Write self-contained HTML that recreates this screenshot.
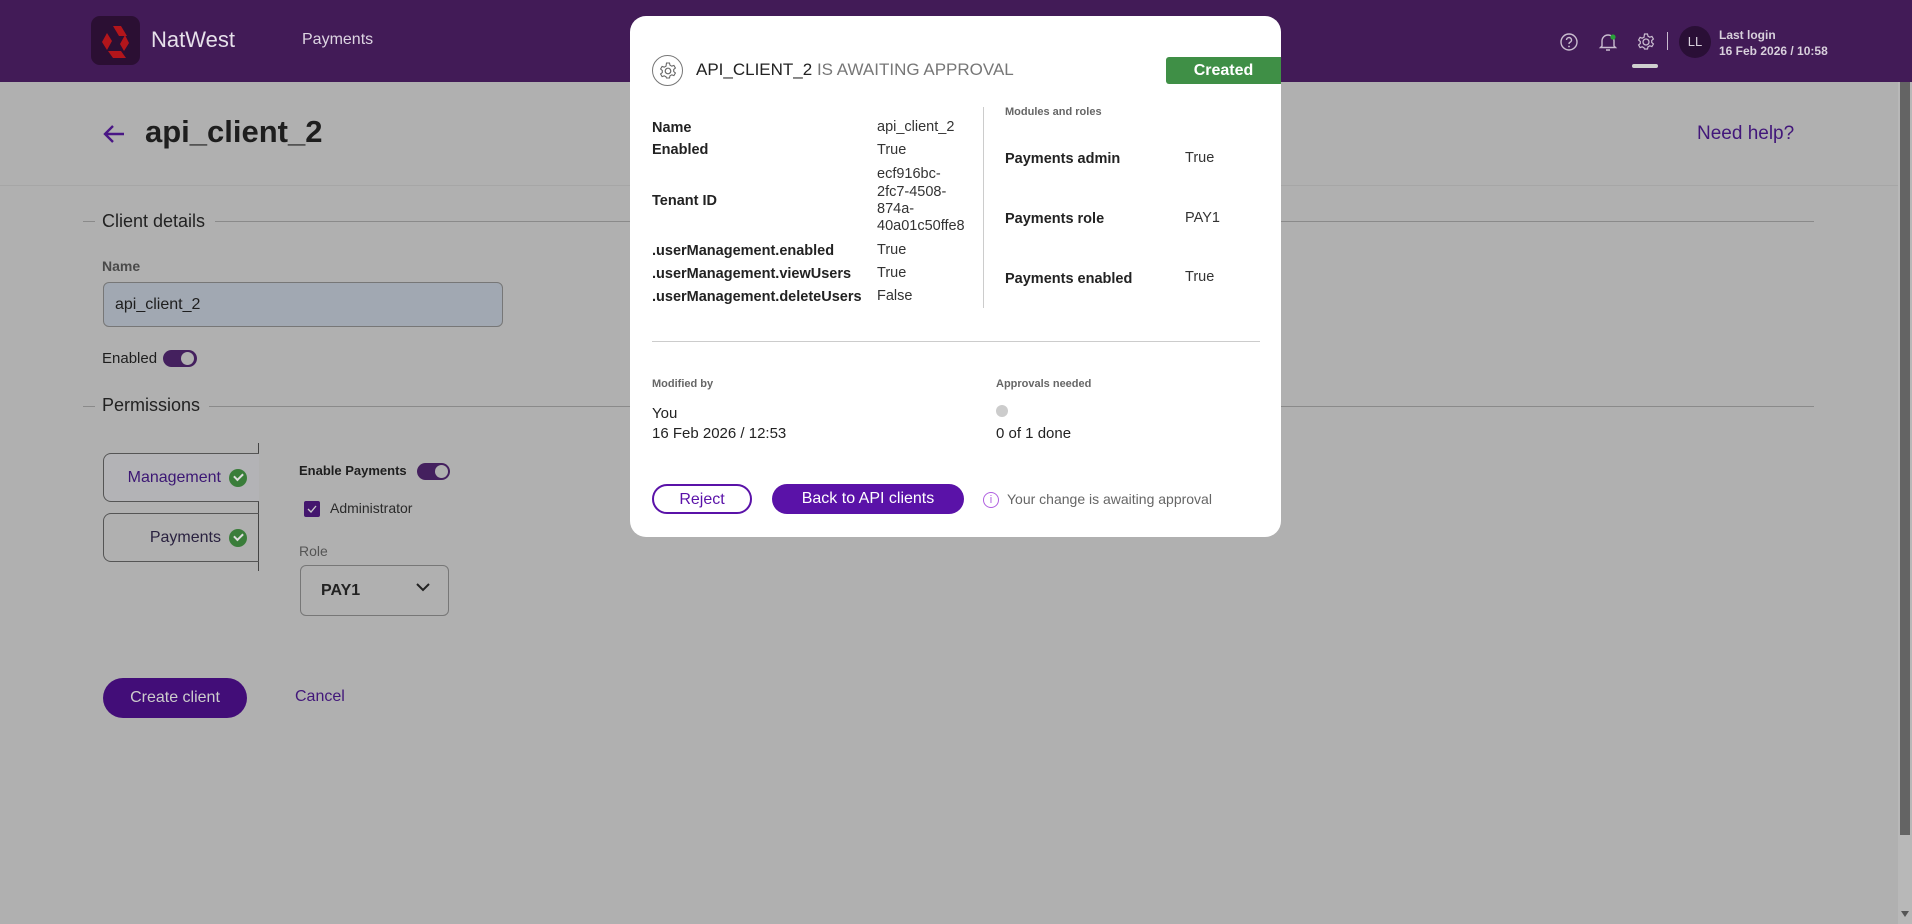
<!DOCTYPE html>
<html><head><meta charset="utf-8"><style>
*{box-sizing:border-box;margin:0;padding:0}
body{width:1912px;height:924px;overflow:hidden;background:#b0b0b0;font-family:"Liberation Sans",sans-serif;position:relative;color:#1a1a1a}
.a{position:absolute;white-space:nowrap}
.hdr{position:absolute;left:0;top:0;width:1912px;height:82px;background:#421b57}
.line{position:absolute;height:1px;background:#8a8a8a}
.m{position:absolute;left:630px;top:16px;width:651px;height:521px;background:#fff;border-radius:16px}
.lbl{position:absolute;font-weight:bold;font-size:14.5px;color:#222;white-space:nowrap;transform:translateY(-50%)}
.val{position:absolute;font-size:14.5px;color:#333;white-space:nowrap;transform:translateY(-50%)}
.chk{display:inline-block;width:18px;height:18px;border-radius:50%;background:#3a7d3a;vertical-align:middle;margin-left:8px;position:relative}
.chk:after{content:"";position:absolute;left:5px;top:4px;width:7px;height:4px;border-left:2px solid #ddd;border-bottom:2px solid #ddd;transform:rotate(-45deg)}
</style></head><body>
<div class="hdr"></div>
<div class="a" style="left:91px;top:16px;width:49px;height:49px;border-radius:9px;background:#2b0f33"></div>
<svg class="a" style="left:96px;top:22px" width="38" height="38" viewBox="0 0 38 38"><path d="M17 4h8l6 10h-8zM6 20l5-9 5 8-5 9zM12 29h13l5 7H17zM24 22l5-9 4 8-5 8z" fill="#b3151b"/></svg>
<div class="a" style="left:151px;top:27px;font-size:22px;color:#e6e0ea">NatWest</div>
<div class="a" style="left:302px;top:31px;font-size:16px;color:#ddd5e2">Payments</div>
<svg class="a" style="left:1559px;top:32px" width="20" height="20"><circle cx="10" cy="10" r="8" fill="none" stroke="#c9bccf" stroke-width="1.4"/><path d="M7.5 8a2.5 2.5 0 1 1 3.5 2.3c-.8.4-1 .9-1 1.7" fill="none" stroke="#c9bccf" stroke-width="1.4"/><circle cx="10" cy="14.5" r=".9" fill="#c9bccf"/></svg>
<svg class="a" style="left:1598px;top:31px" width="20" height="22"><path d="M4 15V10a6 6 0 0 1 12 0v5l1.5 1.5h-15zM8 19h4" fill="none" stroke="#c9bccf" stroke-width="1.4"/><circle cx="15" cy="6" r="2.6" fill="#2aa03a"/></svg>
<svg class="a" style="left:1636px;top:32px" width="20" height="20"><circle cx="10" cy="10" r="3" fill="none" stroke="#c9bccf" stroke-width="1.3"/><path d="M8.5 2h3l.5 2.2 1.8 1 2.1-.8 1.5 2.6-1.7 1.5v2l1.7 1.5-1.5 2.6-2.1-.8-1.8 1-.5 2.2h-3L8 15.8l-1.8-1-2.1.8-1.5-2.6L4.3 11.5v-2L2.6 8l1.5-2.6 2.1.8 1.8-1z" fill="none" stroke="#c9bccf" stroke-width="1.2"/></svg>
<div class="a" style="left:1632px;top:64px;width:26px;height:4px;border-radius:2px;background:#cfcfcf"></div>
<div class="a" style="left:1667px;top:32px;width:1px;height:18px;background:#c9bccf"></div>
<div class="a" style="left:1679px;top:26px;width:32px;height:32px;border-radius:50%;background:#2a0f36;color:#d8d0dc;font-size:13px;line-height:32px;text-align:center">LL</div>
<div class="a" style="left:1719px;top:28px;font-size:12px;font-weight:bold;color:#d8d0dc">Last login</div>
<div class="a" style="left:1719px;top:44px;font-size:12px;font-weight:bold;color:#d8d0dc">16 Feb 2026 / 10:58</div>

<svg class="a" style="left:102px;top:123px" width="24" height="22"><path d="M22 11H3M11 3l-8 8 8 8" fill="none" stroke="#4a1785" stroke-width="2.4"/></svg>
<div class="a" style="left:145px;top:114px;font-size:31px;font-weight:bold;color:#1e1e1e">api_client_2</div>
<div class="a" style="left:1697px;top:123px;font-size:19px;color:#42177a">Need help?</div>
<div class="line" style="left:0;top:185px;width:1898px;background:#a6a6a6"></div>
<div class="line" style="left:83px;top:221px;width:12px"></div>
<div class="a" style="left:102px;top:211px;font-size:18px;color:#222">Client details</div>
<div class="line" style="left:215px;top:221px;width:1599px"></div>
<div class="a" style="left:102px;top:258px;font-size:14px;font-weight:bold;color:#4a4a4a">Name</div>
<div class="a" style="left:103px;top:282px;width:400px;height:45px;border:1px solid #777;border-radius:6px;background:#a1a8b2;font-size:16px;line-height:43px;padding-left:11px;color:#1e1e1e">api_client_2</div>
<div class="a" style="left:102px;top:350px;font-size:15px;color:#1e1e1e">Enabled</div>
<div class="a" style="left:163px;top:350px;width:34px;height:17px;border-radius:9px;background:#44205e"></div>
<div class="a" style="left:181px;top:352px;width:13px;height:13px;border-radius:50%;background:#b0b0b0"></div>
<div class="line" style="left:83px;top:406px;width:12px"></div>
<div class="a" style="left:102px;top:395px;font-size:18px;color:#222">Permissions</div>
<div class="line" style="left:209px;top:406px;width:1605px"></div>

<div class="a" style="left:258px;top:443px;width:1px;height:128px;background:#444"></div>
<div class="a" style="left:103px;top:453px;width:156px;height:49px;border:1px solid #555;border-right:none;border-radius:8px 0 0 8px;background:#b3b3b6;font-size:16px;line-height:47px;text-align:right;padding-right:12px;color:#3c1774">Management<span class="chk"></span></div>
<div class="a" style="left:103px;top:513px;width:156px;height:49px;border:1px solid #555;border-right:none;border-radius:8px 0 0 8px;font-size:16px;line-height:47px;text-align:right;padding-right:12px;color:#2a2240">Payments<span class="chk"></span></div>
<div class="a" style="left:299px;top:463px;font-size:13px;font-weight:bold;color:#1e1e1e">Enable Payments</div>
<div class="a" style="left:417px;top:463px;width:33px;height:17px;border-radius:9px;background:#44205e"></div>
<div class="a" style="left:435px;top:465px;width:13px;height:13px;border-radius:50%;background:#b0b0b0"></div>
<div class="a" style="left:304px;top:501px;width:16px;height:16px;border-radius:2px;background:#44166e"></div>
<svg class="a" style="left:304px;top:501px" width="16" height="16"><path d="M4 8l3 3 5-6" fill="none" stroke="#ccc" stroke-width="1.3"/></svg>
<div class="a" style="left:330px;top:500px;font-size:14px;color:#2a2a2a">Administrator</div>
<div class="a" style="left:299px;top:543px;font-size:14px;color:#555">Role</div>
<div class="a" style="left:300px;top:565px;width:149px;height:51px;border:1px solid #777;border-radius:6px;font-size:16px;font-weight:bold;line-height:49px;padding-left:20px;color:#222">PAY1</div>
<svg class="a" style="left:415px;top:582px" width="16" height="12"><path d="M2 2l6 6 6-6" fill="none" stroke="#222" stroke-width="2"/></svg>
<div class="a" style="left:103px;top:678px;width:144px;height:40px;border-radius:20px;background:#420d78;color:#ccc;font-size:16px;line-height:40px;text-align:center">Create client</div>
<div class="a" style="left:295px;top:688px;font-size:16px;color:#42177a">Cancel</div>
<div class="a" style="left:1898px;top:82px;width:14px;height:842px;background:#b8b8b8"></div>
<div class="a" style="left:1900px;top:82px;width:10px;height:753px;background:#646464"></div>
<svg class="a" style="left:1900px;top:910px" width="10" height="8"><path d="M1 1h8L5 7z" fill="#555"/></svg>

<div class="m">
<div class="a" style="left:22px;top:39px;width:31px;height:31px;border:1px solid #777;border-radius:50%"></div>
<svg class="a" style="left:28px;top:45px" width="20" height="20"><circle cx="10" cy="10" r="2.8" fill="none" stroke="#666" stroke-width="1.2"/><path d="M8.5 2h3l.5 2.2 1.8 1 2.1-.8 1.5 2.6-1.7 1.5v2l1.7 1.5-1.5 2.6-2.1-.8-1.8 1-.5 2.2h-3L8 15.8l-1.8-1-2.1.8-1.5-2.6L4.3 11.5v-2L2.6 8l1.5-2.6 2.1.8 1.8-1z" fill="none" stroke="#666" stroke-width="1.1"/></svg>
<div class="a" style="left:66px;top:44px;font-size:17px;color:#222">API_CLIENT_2 <span style="color:#777">IS AWAITING APPROVAL</span></div>
<div class="a" style="left:536px;top:41px;width:115px;height:27px;background:#3f8f46;border-radius:3px 0 0 3px;color:#fff;font-weight:bold;font-size:16px;line-height:27px;text-align:center">Created</div>
<div class="lbl" style="left:22px;top:112px">Name</div><div class="val" style="left:247px;top:111px">api_client_2</div>
<div class="lbl" style="left:22px;top:134px">Enabled</div><div class="val" style="left:247px;top:134px">True</div>
<div class="lbl" style="left:22px;top:185px">Tenant ID</div>
<div class="val" style="left:247px;top:158px">ecf916bc-</div><div class="val" style="left:247px;top:176px">2fc7-4508-</div><div class="val" style="left:247px;top:193px">874a-</div><div class="val" style="left:247px;top:210px">40a01c50ffe8</div>
<div class="lbl" style="left:22px;top:235px">.userManagement.enabled</div><div class="val" style="left:247px;top:234px">True</div>
<div class="lbl" style="left:22px;top:258px">.userManagement.viewUsers</div><div class="val" style="left:247px;top:257px">True</div>
<div class="lbl" style="left:22px;top:281px">.userManagement.deleteUsers</div><div class="val" style="left:247px;top:280px">False</div>
<div class="a" style="left:353px;top:91px;width:1px;height:201px;background:#ccc"></div>
<div class="a" style="left:375px;top:90px;font-size:11px;font-weight:bold;color:#666">Modules and roles</div>
<div class="lbl" style="left:375px;top:143px">Payments admin</div><div class="val" style="left:555px;top:142px">True</div>
<div class="lbl" style="left:375px;top:203px">Payments role</div><div class="val" style="left:555px;top:202px">PAY1</div>
<div class="lbl" style="left:375px;top:263px">Payments enabled</div><div class="val" style="left:555px;top:261px">True</div>
<div class="a" style="left:22px;top:325px;width:608px;height:1px;background:#ccc"></div>
<div class="a" style="left:22px;top:362px;font-size:11px;font-weight:bold;color:#666">Modified by</div>
<div class="a" style="left:22px;top:389px;font-size:15px;color:#222">You</div>
<div class="a" style="left:22px;top:409px;font-size:15px;color:#222">16 Feb 2026 / 12:53</div>
<div class="a" style="left:366px;top:362px;font-size:11px;font-weight:bold;color:#666">Approvals needed</div>
<div class="a" style="left:366px;top:389px;width:12px;height:12px;border-radius:50%;background:#ccc"></div>
<div class="a" style="left:366px;top:409px;font-size:15px;color:#222">0 of 1 done</div>
<div class="a" style="left:22px;top:468px;width:100px;height:30px;border:2px solid #5a12a8;border-radius:15px;color:#5a12a8;font-size:16px;line-height:27px;text-align:center"><span style="position:relative;top:0">Reject</span></div>
<div class="a" style="left:142px;top:468px;width:192px;height:30px;border-radius:15px;background:#5a12a8;color:#fff;font-size:16px;line-height:30px;text-align:center">Back to API clients</div>
<div class="a" style="left:353px;top:476px;width:16px;height:16px;border:1px solid #b060e0;border-radius:50%;color:#b060e0;font-size:11px;line-height:14px;text-align:center">i</div>
<div class="a" style="left:377px;top:475px;font-size:14px;color:#666">Your change is awaiting approval</div>
</div>
</body></html>
